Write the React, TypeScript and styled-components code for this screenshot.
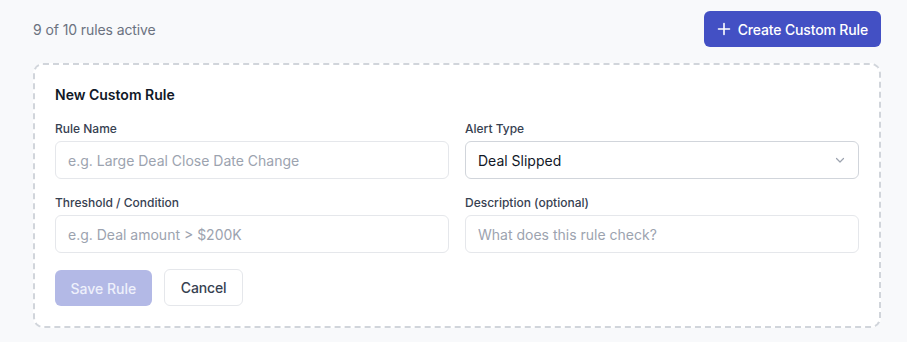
import React from "react";
import styled, { createGlobalStyle } from "styled-components";

const Global = createGlobalStyle`
  html, body { margin: 0; padding: 0; background: #f8f9fb; }
  body { font-family: Inter, "Noto Sans", sans-serif; -webkit-font-smoothing: antialiased; }
  * { box-sizing: border-box; }
`;

const Page = styled.div`
  padding: 11px 26px 14px 33px;
  display: flex;
  flex-direction: column;
  gap: 16px;
`;

const Header = styled.div`
  display: flex;
  align-items: center;
  justify-content: space-between;
`;

const Count = styled.span`
  font-size: 14px;
  letter-spacing: -0.1px;
  color: #6b7280;
`;

const PrimaryButton = styled.button<{ $disabled?: boolean }>`
  display: inline-flex;
  align-items: center;
  gap: 7px;
  height: 36px;
  padding: 0 13px;
  border: none;
  border-radius: 6px;
  background: ${(p) => (p.$disabled ? "#b3b9e6" : "#4350c4")};
  color: ${(p) => (p.$disabled ? "#eef0fb" : "#ffffff")};
  font-family: inherit;
  font-size: 14px;
  letter-spacing: -0.15px;
  font-weight: 500;
  cursor: pointer;
`;

const SaveButton = styled(PrimaryButton)`
  padding: 0 15.5px;
  letter-spacing: 0;
`;

const SecondaryButton = styled.button`
  height: 37px;
  padding: 0 16px;
  border: 1px solid #e5e7eb;
  border-radius: 6px;
  background: #fff;
  color: #374151;
  font-family: inherit;
  font-size: 14px;
  letter-spacing: -0.15px;
  font-weight: 500;
`;

const Card = styled.div`
  border: 2px dashed #d1d5db;
  border-radius: 10px;
  background: #fff;
  padding: 20px;
`;

const Title = styled.h3`
  margin: 0 0 16px;
  font-size: 14px;
  line-height: 20px;
  font-weight: 600;
  color: #111827;
`;

const Grid = styled.div`
  display: grid;
  grid-template-columns: 1fr 1fr;
  column-gap: 16px;
  row-gap: 16px;
`;

const Field = styled.label`
  display: flex;
  flex-direction: column;
  gap: 4px;
`;

const Label = styled.span`
  font-size: 12px;
  line-height: 16px;
  font-weight: 500;
  color: #374151;
`;

const Input = styled.input`
  height: 38px;
  padding: 0 12px;
  border: 1px solid #e5e7eb;
  border-radius: 6px;
  font-family: inherit;
  font-size: 14px;
  color: #111827;
  background: #fff;
  outline: none;
  &::placeholder { color: #9ca3af; }
`;

const SelectBox = styled.div`
  height: 38px;
  padding: 0 12px;
  border: 1px solid #d1d5db;
  border-radius: 6px;
  display: flex;
  align-items: center;
  justify-content: space-between;
  font-size: 14px;
  color: #111827;
  background: #fff;
`;

const Actions = styled.div`
  display: flex;
  align-items: flex-end;
  gap: 12px;
  margin-top: 16px;
`;

const Plus = () => (
  <svg width="14" height="14" viewBox="0 0 14 14" fill="none" stroke="currentColor" strokeWidth="1.6" strokeLinecap="round">
    <path d="M7 1.5v11M1.5 7h11" />
  </svg>
);

const Chevron = () => (
  <svg width="12" height="12" viewBox="0 0 12 12" fill="none" stroke="#9ca3af" strokeWidth="1.2" strokeLinecap="round" strokeLinejoin="round">
    <path d="M2.5 4.5L6 8l3.5-3.5" />
  </svg>
);

export default function App() {
  return (
    <>
      <Global />
      <Page>
        <Header>
          <Count>9 of 10 rules active</Count>
          <PrimaryButton>
            <Plus />
            Create Custom Rule
          </PrimaryButton>
        </Header>
        <Card>
          <Title>New Custom Rule</Title>
          <Grid>
            <Field>
              <Label>Rule Name</Label>
              <Input placeholder="e.g. Large Deal Close Date Change" />
            </Field>
            <Field>
              <Label>Alert Type</Label>
              <SelectBox>
                <span>Deal Slipped</span>
                <Chevron />
              </SelectBox>
            </Field>
            <Field>
              <Label>Threshold / Condition</Label>
              <Input placeholder="e.g. Deal amount > $200K" />
            </Field>
            <Field>
              <Label>Description (optional)</Label>
              <Input placeholder="What does this rule check?" />
            </Field>
          </Grid>
          <Actions>
            <SaveButton $disabled>Save Rule</SaveButton>
            <SecondaryButton>Cancel</SecondaryButton>
          </Actions>
        </Card>
      </Page>
    </>
  );
}
